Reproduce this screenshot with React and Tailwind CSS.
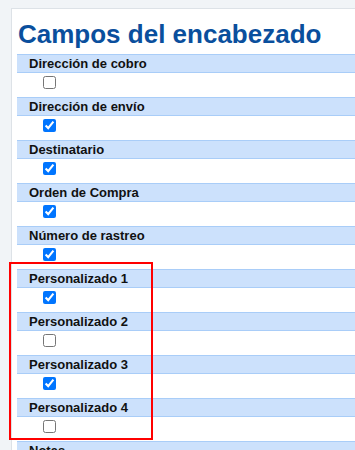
import { useState } from "react";

const fields = [
    { label: "Dirección de cobro", checked: false },
    { label: "Dirección de envío", checked: true },
    { label: "Destinatario", checked: true },
    { label: "Orden de Compra", checked: true },
    { label: "Número de rastreo", checked: true },
    { label: "Personalizado 1", checked: true },
    { label: "Personalizado 2", checked: false },
    { label: "Personalizado 3", checked: true },
    { label: "Personalizado 4", checked: false },
    { label: "Notas", checked: false },
];

function FieldRow({ label, checked, onToggle }) {
    return (
        <div>
            <div className="h-[19px] border-y border-[#a9cdf8] bg-[#cce1fc] pl-[12px] text-[13px] font-bold leading-[17px] text-[#111]">
                {label}
            </div>
            <div className="h-[24px] pt-[3px]">
                <input
                    type="checkbox"
                    checked={checked}
                    onChange={onToggle}
                    className="m-0 ml-[26px] block h-[13px] w-[13px]"
                />
            </div>
        </div>
    );
}

export default function App() {
    const [values, setValues] = useState(fields.map((f) => f.checked));

    function toggle(i) {
        setValues(values.map((v, j) => (j === i ? !v : v)));
    }

    return (
        <div
            className="relative h-[450px] overflow-hidden bg-[#f1f4f7] pl-[11px] pt-[8px]"
            style={{ fontFamily: '"Liberation Sans", Arial, sans-serif' }}
        >
            <div className="w-[400px] border border-[#dde2e7] bg-white pl-[5px] pt-[10px]">
                <h1 className="mb-[5px] pl-[1px] text-[26px] font-bold leading-[30px] text-[#0a4f9d]">
                    Campos del encabezado
                </h1>
                {fields.map((f, i) => (
                    <FieldRow
                        key={f.label}
                        label={f.label}
                        checked={values[i]}
                        onToggle={() => toggle(i)}
                    />
                ))}
            </div>
            {/* highlight around the custom fields */}
            <div className="pointer-events-none absolute left-[9px] top-[262px] h-[178px] w-[144px] border-2 border-[#ff0000]" />
        </div>
    );
}
